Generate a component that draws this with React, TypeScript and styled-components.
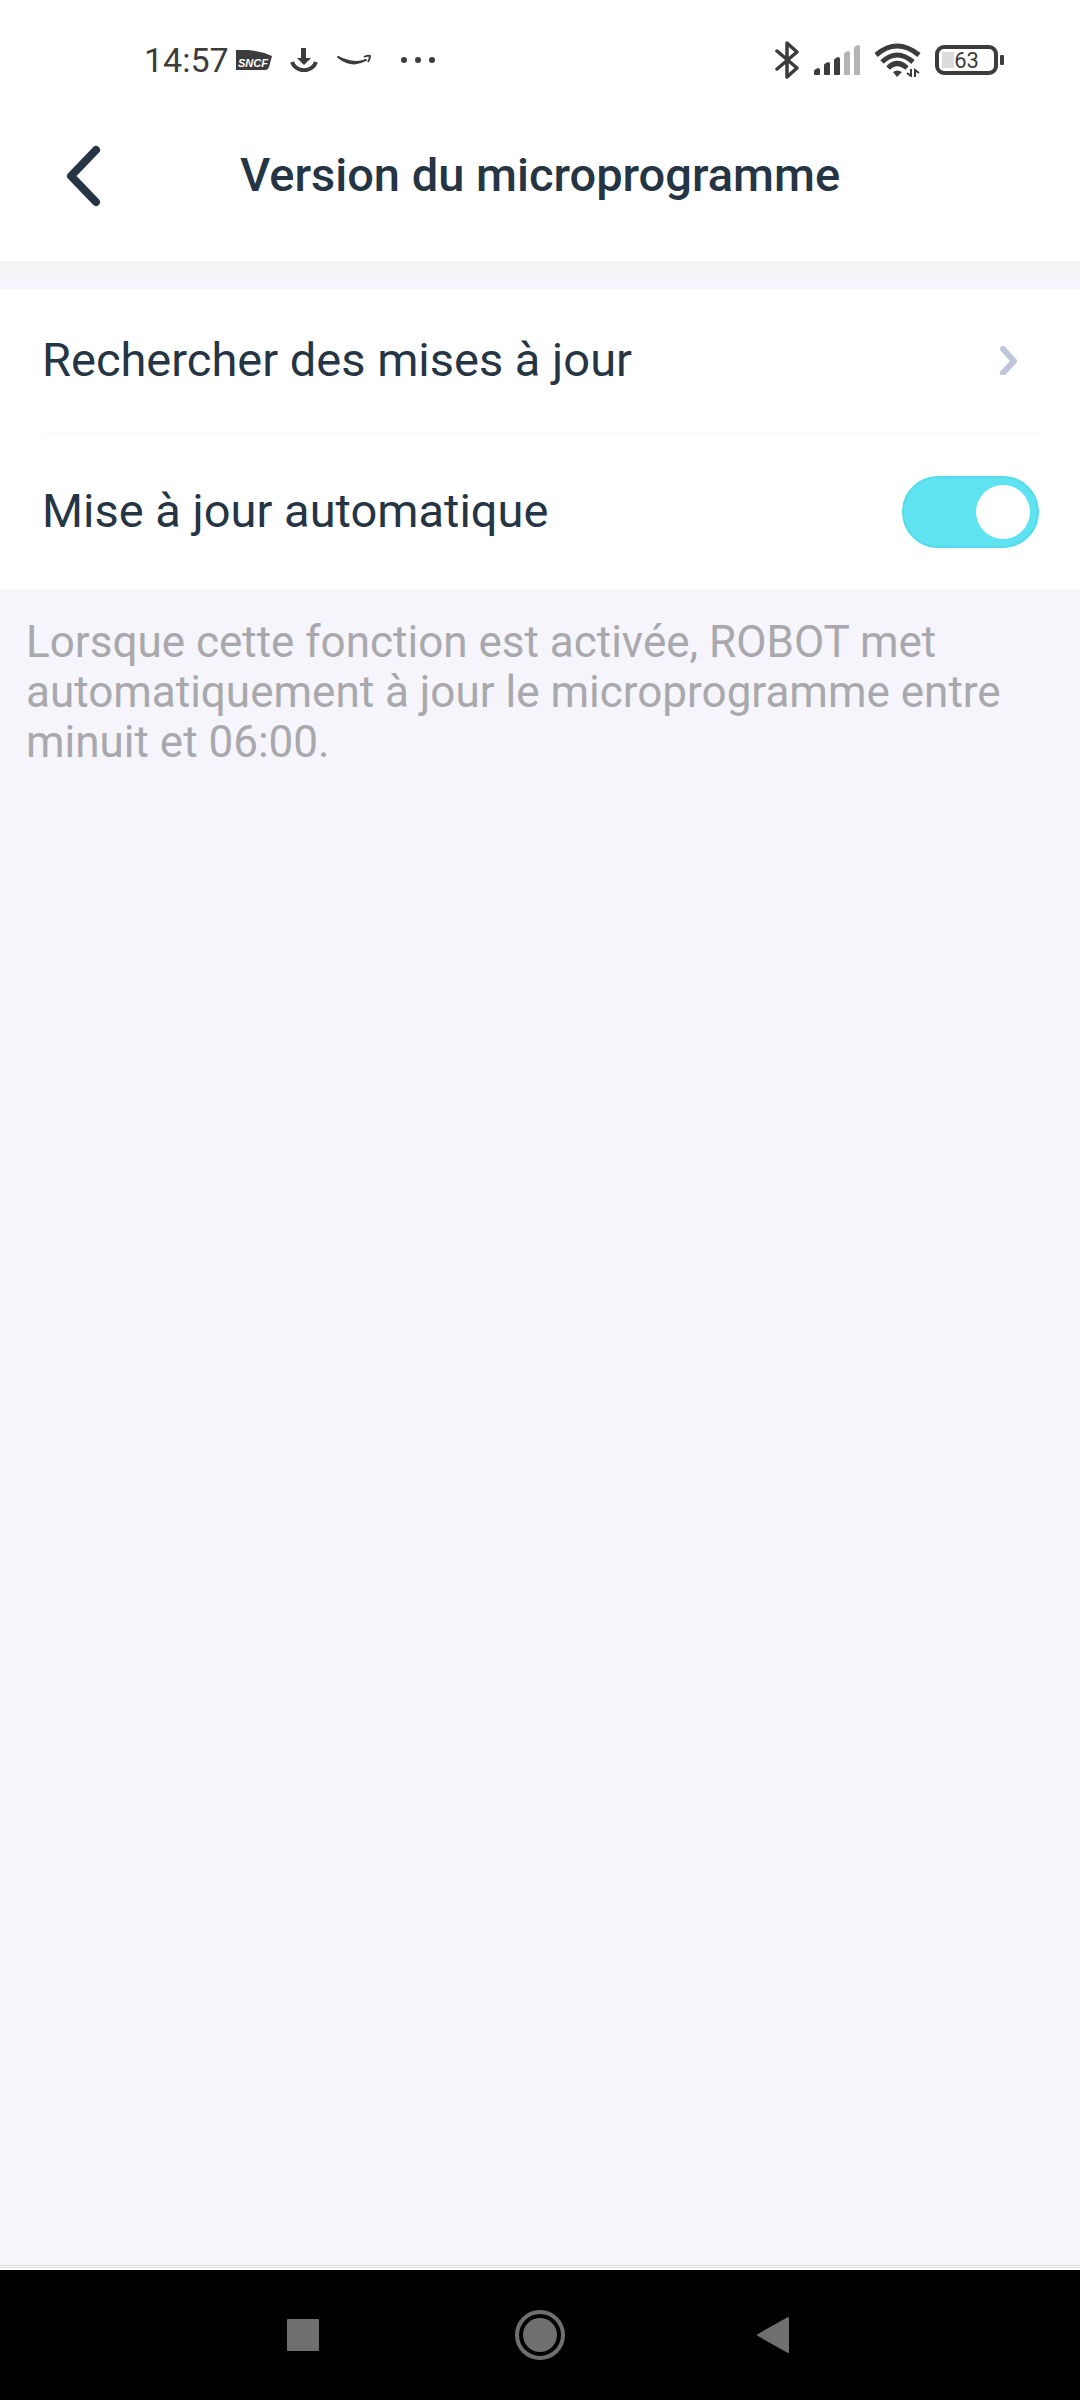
import React, { useState } from "react";
import styled, { createGlobalStyle } from "styled-components";

const ink = "#263544";
const statusInk = "#3c3c3c";
const fontStack = 'Roboto, "Noto Sans", sans-serif';

const GlobalStyle = createGlobalStyle`
  *, *::before, *::after { box-sizing: border-box; }
  body { margin: 0; background: #f5f5fb; }
`;

const Screen = styled.div`
  display: flex;
  flex-direction: column;
  min-height: 100vh;
  font-family: ${fontStack};
  color: ${ink};
  background: #f5f5fb;
`;

const StatusBar = styled.div`
  display: flex;
  justify-content: space-between;
  align-items: center;
  height: 90px;
  padding: 30px 76px 0 144px;
  background: #fff;
  color: ${statusInk};
`;

const StatusGroup = styled.div<{ $gap: number }>`
  display: flex;
  align-items: center;
  gap: ${(p) => p.$gap}px;
`;

const Clock = styled.time`
  font-size: 34px;
  line-height: 40px;
`;

const Glyph = styled.svg`
  display: block;
  flex: none;
`;

const Battery = styled.div`
  display: flex;
  align-items: center;
  gap: 2px;
  &::after {
    content: "";
    width: 4px;
    height: 10px;
    border-radius: 1px;
    background: ${statusInk};
  }
`;

const BatteryCase = styled.div`
  width: 63px;
  height: 30px;
  border: 4px solid ${statusInk};
  border-radius: 9px;
  background: linear-gradient(#dcdcdc, #dcdcdc) 3px 3px / 12px 16px no-repeat;
  font-size: 22px;
  line-height: 24px;
  text-align: center;
`;

const Header = styled.header`
  display: grid;
  grid-template-columns: 1fr auto 1fr;
  align-items: center;
  height: 171px;
  padding: 0 59px;
  background: #fff;
`;

const BackButton = styled.button`
  display: flex;
  justify-self: start;
  padding: 0;
  border: 0;
  background: none;
  color: ${ink};
`;

const Title = styled.h1`
  margin: 0;
  padding-bottom: 2px;
  font-size: 47px;
  line-height: 56px;
  font-weight: 500;
`;

const Settings = styled.section`
  padding: 0 41px 0 42px;
  margin-top: 28px;
  background: #fff;
  box-shadow: 0 -16px 0 #f5f5fb, 0 -28px 0 #f4f4f4;
`;

const rowStyle = `
  display: flex;
  align-items: center;
  justify-content: space-between;
  width: 100%;
  font-family: ${fontStack};
  font-size: 47px;
  line-height: 56px;
  font-weight: 400;
  color: ${ink};
`;

const LinkRow = styled.button`
  ${rowStyle}
  height: 145px;
  padding: 0 20px 2px 0;
  border: 0;
  border-bottom: 1px solid #f8f8f8;
  background: none;
  text-align: left;
`;

const SwitchRow = styled.label`
  ${rowStyle}
  height: 155px;
`;

const SwitchText = styled.span`
  padding-bottom: 2px;
`;

const Switch = styled.input`
  appearance: none;
  display: flex;
  align-items: center;
  flex: none;
  width: 137px;
  height: 72px;
  margin: 0;
  padding: 0 7px;
  border: 2px solid #55dbe9;
  border-radius: 36px;
  background: #5fe3f1;
  &::before {
    content: "";
    width: 54px;
    height: 54px;
    border-radius: 50%;
    background: #fff;
  }
  &:checked {
    justify-content: flex-end;
  }
  &:not(:checked) {
    background: #d5d8de;
    border-color: #c8ccd4;
  }
`;

const Hint = styled.p`
  margin: 0;
  padding: 28px 60px 0 26px;
  font-size: 44px;
  line-height: 50px;
  color: #a8a8ad;
`;

const NavBar = styled.nav`
  display: flex;
  align-items: center;
  justify-content: space-between;
  height: 135px;
  margin-top: auto;
  padding: 5px 286px 0;
  background: linear-gradient(
    #dcdcde 1px, #fff 1px 2px, #dcdcde 2px 3px, #fff 3px 5px, #000 5px
  );
`;

const NavButton = styled.button`
  display: flex;
  padding: 0;
  border: 0;
  background: none;
  color: #6f6f6f;
`;

function SncfIcon() {
  return (
    <Glyph width="36" height="20" viewBox="0 0 36 20" aria-hidden="true">
      <path d="M0 0H12Q26 1 36 6L33 17Q32 20 29 20H0Z" fill={statusInk} />
      <text x="17" y="17" textAnchor="middle" fontFamily="Liberation Sans, sans-serif" fontSize="11" fontWeight="700" fontStyle="italic" fill="#fff">
        SNCF
      </text>
    </Glyph>
  );
}

function DownloadIcon() {
  return (
    <Glyph width="28" height="24" viewBox="0 0 28 24" fill="none" aria-hidden="true">
      <path d="M11 0H16V10H21L14 17L7 10H11Z" fill={statusInk} />
      <path d="M2 14C6 25 22 25 26 14" stroke={statusInk} strokeWidth="4" />
    </Glyph>
  );
}

function SmileIcon() {
  return (
    <Glyph width="36" height="12" viewBox="0 0 36 12" fill="none" aria-hidden="true">
      <path d="M2 3Q16 14 30 6Q17 11 2 3Z" fill={statusInk} stroke={statusInk} strokeWidth="2" strokeLinejoin="round" />
      <path d="M28 3Q31 1 34 2Q34 5 32 8" stroke={statusInk} strokeWidth="2" />
    </Glyph>
  );
}

function DotsIcon() {
  return (
    <Glyph width="48" height="8" viewBox="0 0 48 8" fill={statusInk} aria-hidden="true">
      <circle cx="14" cy="4" r="3" />
      <circle cx="28" cy="4" r="3" />
      <circle cx="42" cy="4" r="3" />
    </Glyph>
  );
}

function BluetoothIcon() {
  return (
    <Glyph width="26" height="40" viewBox="0 0 26 40" fill="none" stroke={statusInk} strokeWidth="3.500" strokeLinejoin="round" strokeLinecap="round" aria-hidden="true">
      <path d="M2 11L22 28L12 37V3L22 12L2 29" />
    </Glyph>
  );
}

const bars = [7, 13, 18, 24, 30];

function SignalIcon() {
  return (
    <Glyph width="50" height="30" viewBox="0 0 50 30" aria-hidden="true">
      {bars.map((h, i) => (
        <path
          key={h}
          d={`M${i * 10 + 1} ${33 - h}Q${i * 10 + 1} ${32 - h} ${i * 10 + 3} ${31 - h}L${i * 10 + 5} ${30 - h}Q${i * 10 + 7} ${30 - h} ${i * 10 + 7} ${32 - h}V29Q${i * 10 + 7} 30 ${i * 10 + 6} 30H${i * 10 + 2}Q${i * 10 + 1} 30 ${i * 10 + 1} 29Z`}
          fill={i < 3 ? statusInk : "#b4b4b4"}
        />
      ))}
    </Glyph>
  );
}

function WifiIcon() {
  return (
    <Glyph width="48" height="34" viewBox="0 0 48 34" fill="none" stroke={statusInk} strokeWidth="5" aria-hidden="true">
      <path d="M1 12Q22 -6 44 12" />
      <path d="M7 19Q22 5 38 19" />
      <path d="M13 25Q22 16 32 25" />
      <path d="M18 29Q22 26 27 29L22 34Z" fill={statusInk} stroke="none" />
      <path d="M36 26V33L32 30M40 34V27L44 30" strokeWidth="2" />
    </Glyph>
  );
}

export default function App() {
  const [auto, setAuto] = useState(true);
  return (
    <Screen>
      <GlobalStyle />
      <StatusBar>
        <StatusGroup $gap={7}>
          <Clock>14:57</Clock>
          <StatusGroup $gap={18}>
            <SncfIcon />
            <DownloadIcon />
            <SmileIcon />
            <DotsIcon />
          </StatusGroup>
        </StatusGroup>
        <StatusGroup $gap={12}>
          <BluetoothIcon />
          <SignalIcon />
          <WifiIcon />
          <Battery>
            <BatteryCase>63</BatteryCase>
          </Battery>
        </StatusGroup>
      </StatusBar>

      <Header>
        <BackButton type="button" aria-label="Retour">
          <Glyph width="48" height="62" viewBox="0 0 48 62" fill="none" stroke="currentColor" strokeWidth="8" strokeLinecap="round" strokeLinejoin="round" aria-hidden="true">
            <path d="M37 5L12 31L37 57" />
          </Glyph>
        </BackButton>
        <Title>Version du microprogramme</Title>
      </Header>

      <Settings>
        <LinkRow type="button">
          Rechercher des mises à jour
          <Glyph width="20" height="30" viewBox="0 0 20 30" fill="none" stroke="#bdc6da" strokeWidth="6" strokeLinecap="round" strokeLinejoin="round" aria-hidden="true">
            <path d="M4 4L15 16L4 28" />
          </Glyph>
        </LinkRow>
        <SwitchRow>
          <SwitchText>Mise à jour automatique</SwitchText>
          <Switch type="checkbox" checked={auto} onChange={(e) => setAuto(e.target.checked)} />
        </SwitchRow>
      </Settings>

      <Hint>
        Lorsque cette fonction est activée, ROBOT met automatiquement à jour le microprogramme entre minuit et 06:00.
      </Hint>

      <NavBar>
        <NavButton type="button" aria-label="Applications récentes">
          <Glyph width="38" height="34" viewBox="0 0 38 34" fill="currentColor" aria-hidden="true">
            <rect x="1" y="1" width="32" height="32" rx="1" />
          </Glyph>
        </NavButton>
        <NavButton type="button" aria-label="Accueil">
          <Glyph width="50" height="50" viewBox="0 0 50 50" aria-hidden="true">
            <circle cx="25" cy="25" r="23" fill="none" stroke="currentColor" strokeWidth="4" />
            <circle cx="25" cy="25" r="17" fill="currentColor" />
          </Glyph>
        </NavButton>
        <NavButton type="button" aria-label="Précédent">
          <Glyph width="38" height="38" viewBox="0 0 38 38" fill="currentColor" stroke="currentColor" strokeWidth="2" strokeLinejoin="round" aria-hidden="true">
            <path d="M2 19L32 2V36Z" />
          </Glyph>
        </NavButton>
      </NavBar>
    </Screen>
  );
}
